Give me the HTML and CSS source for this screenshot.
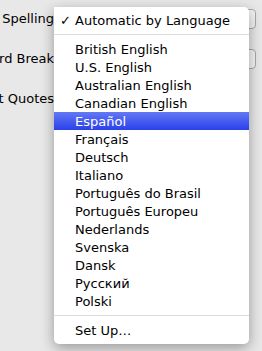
FILE: index.html
```html
<!DOCTYPE html>
<html lang="en">
<head>
  <meta charset="UTF-8" />
  <title>Spelling</title>
  <link rel="stylesheet" href="styles.css">
</head>
<body>

  <div class="prefs">
    <div class="row">
      <div class="label">Spelling</div>
      <div class="popup"></div>
    </div>
    <div class="row">
      <div class="label">Word Break</div>
      <div class="popup"></div>
    </div>
    <div class="row">
      <div class="label">Smart Quotes</div>
      <div class="popup hidden"></div>
    </div>
  </div>

  <div class="menu">
    <div class="item checked"><span class="check">✓</span>Automatic by Language</div>
    <div class="sep"></div>
    <div class="item">British English</div>
    <div class="item">U.S. English</div>
    <div class="item">Australian English</div>
    <div class="item">Canadian English</div>
    <div class="item selected">Español</div>
    <div class="item">Français</div>
    <div class="item">Deutsch</div>
    <div class="item">Italiano</div>
    <div class="item">Português do Brasil</div>
    <div class="item">Português Europeu</div>
    <div class="item">Nederlands</div>
    <div class="item">Svenska</div>
    <div class="item">Dansk</div>
    <div class="item">Русский</div>
    <div class="item">Polski</div>
    <div class="sep"></div>
    <div class="item">Set Up…</div>
  </div>

</body>
</html>
```

FILE: styles.css
```css
body {
  margin: 0;
  background: #e8e8e8;
  font-family: 'DejaVu Sans', sans-serif;
  font-size: 13px;
  color: #000;
  width: 262px;
  height: 351px;
  overflow: hidden;
}

.prefs {
  padding-top: 9px;
}

.row {
  display: flex;
  align-items: flex-start;
  height: 40px;
}

.label {
  width: 54px;
  flex: none;
  display: flex;
  justify-content: flex-end;
  white-space: nowrap;
  padding-top: 2px;
}

.popup {
  margin-left: 4px;
  width: 198px;
  height: 20px;
  background: #f4f4f4;
  border: 1px solid #a8a8a8;
  border-radius: 4px;
  box-sizing: border-box;
}

.popup.hidden { visibility: hidden; }

/* the open popup menu floats over the form */
.menu {
  position: absolute;
  left: 54px;
  top: 7px;
  width: 195px;
  padding: 4px 0 5px;
  background: #fff;
  border-radius: 0 5px 5px 5px;
  box-shadow: 0 4px 14px rgba(0, 0, 0, 0.35);
  box-sizing: border-box;
}

.item {
  height: 18px;
  line-height: 19px;
  padding-left: 21px;
  white-space: nowrap;
  position: relative;
}

.check {
  position: absolute;
  left: 6px;
}

.sep {
  border-top: 1px solid #dcdcdc;
  box-sizing: border-box;
  margin-top: 5px;
  height: 6px;
}

.selected {
  background: linear-gradient(#6378f4, #2b40ea);
  color: #fff;
}
```
